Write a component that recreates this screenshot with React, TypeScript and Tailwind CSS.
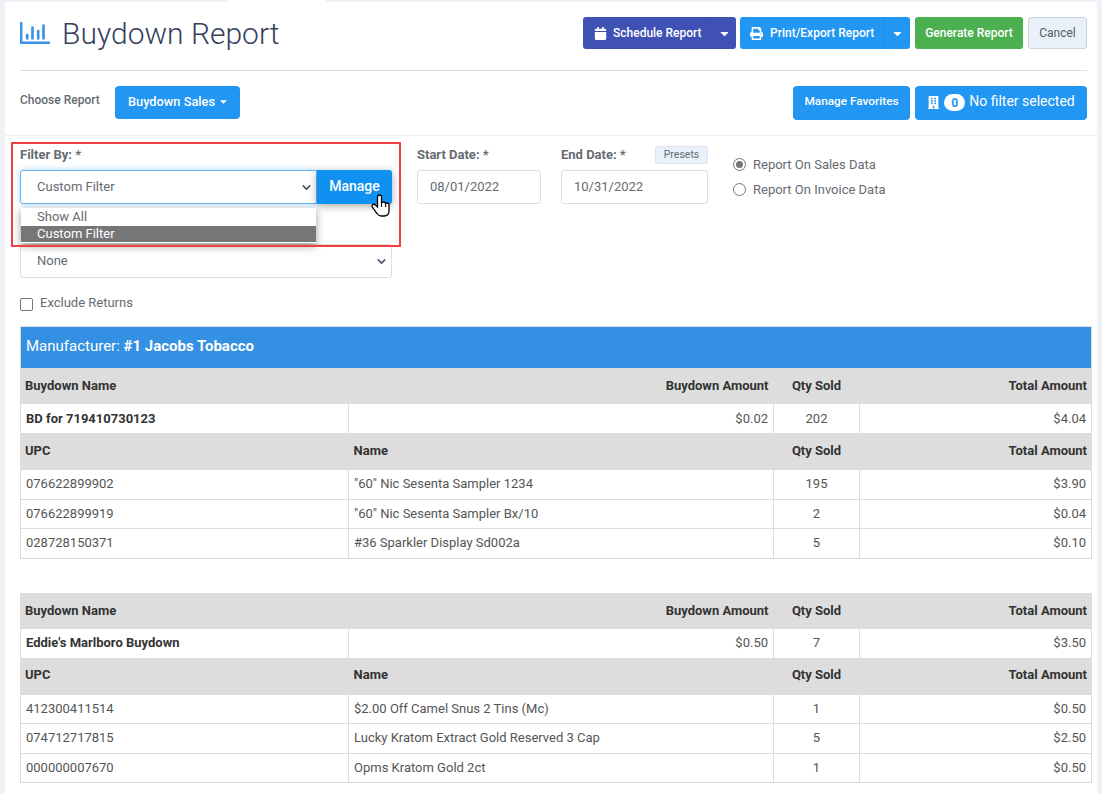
import { ChevronDown } from "lucide-react";
import { FaBuilding, FaCalendar, FaCaretDown, FaPrint } from "react-icons/fa";

type Line = { upc: string; name: string; qty: string; total: string };
type Buydown = { name: string; amount: string; qty: string; total: string; lines: Line[] };

const buydowns: Buydown[] = [
  {
    name: "BD for 719410730123",
    amount: "$0.02",
    qty: "202",
    total: "$4.04",
    lines: [
      { upc: "076622899902", name: '"60" Nic Sesenta Sampler 1234', qty: "195", total: "$3.90" },
      { upc: "076622899919", name: '"60" Nic Sesenta Sampler Bx/10', qty: "2", total: "$0.04" },
      { upc: "028728150371", name: "#36 Sparkler Display Sd002a", qty: "5", total: "$0.10" },
    ],
  },
  {
    name: "Eddie's Marlboro Buydown",
    amount: "$0.50",
    qty: "7",
    total: "$3.50",
    lines: [
      { upc: "412300411514", name: "$2.00 Off Camel Snus 2 Tins (Mc)", qty: "1", total: "$0.50" },
      { upc: "074712717815", name: "Lucky Kratom Extract Gold Reserved 3 Cap", qty: "5", total: "$2.50" },
      { upc: "000000007670", name: "Opms Kratom Gold 2ct", qty: "1", total: "$0.50" },
    ],
  },
];

function ReportIcon() {
  return (
    <svg width="30" height="23" viewBox="0 0 30 23" className="text-[#3d94e6]">
      <path d="M1.2 0v20.8H30" fill="none" stroke="currentColor" strokeWidth="2.5" />
      <path d="M7.2 13v3.5M12.5 5.5v11M18.2 9v7.5M23.5 3.5v13" fill="none" stroke="currentColor" strokeWidth="2.7" strokeLinecap="round" />
    </svg>
  );
}

function HandCursor() {
  return (
    <svg width="19" height="23" viewBox="0 0 19 23" className="absolute left-[366px] top-[192px]">
      <path
        d="M8.5 1C7.3 1 6.5 1.8 6.5 3V13L4.5 11C3.5 10 2 10 1.3 11C.8 11.8 1 12.6 1.6 13.3L6 19.5C7 21 8.5 22 10.5 22H13C16 22 18 20 18 17V11C18 9.8 17 9 16 9C15.4 9 15 9.2 14.6 9.5C14.3 8.6 13.5 8 12.6 8C12 8 11.4 8.3 10.5 8.6V3C10.5 1.8 9.7 1 8.5 1Z"
        fill="white"
        stroke="black"
        strokeWidth="1.3"
      />
      <path d="M10.5 8.6V13M14.6 9.5V13" fill="none" stroke="black" strokeWidth="1.1" />
    </svg>
  );
}

function BuydownTable({ data, manufacturer }: { data: Buydown; manufacturer?: string }) {
  const head = "bg-[#dddddd] font-bold text-[#333333] text-[13px]";
  const cell = "border border-[#dddddd] px-[5px] pb-[1px] text-[#555555] text-[13px]";
  const first = manufacturer !== undefined;
  const summary = `border border-[#dddddd] px-[5px] text-[13px] ${first ? "pb-0" : "pb-[2px]"}`;
  return (
    <table className="w-[1071px] table-fixed border-collapse border border-[#dddddd]">
      <colgroup>
        <col className="w-[328px]" />
        <col className="w-[425px]" />
        <col className="w-[86px]" />
        <col className="w-[232px]" />
      </colgroup>
      <tbody>
        {manufacturer && (
          <tr className="h-[41px]">
            <td colSpan={4} className="bg-[#3390e2] px-[5px] pb-[2px] text-[15px] text-white">
              Manufacturer: <b>{manufacturer}</b>
            </td>
          </tr>
        )}
        <tr className={first ? "h-[36px]" : "h-[35.5px]"}>
          <td className={`${head} pl-[4px]`}>Buydown Name</td>
          <td className={`${head} pr-[5px] text-right`}>Buydown Amount</td>
          <td className={`${head} text-center`}>Qty Sold</td>
          <td className={`${head} pr-[4px] text-right`}>Total Amount</td>
        </tr>
        <tr className={first ? "h-[30px]" : "h-[29.5px]"}>
          <td className={`${summary} font-bold text-[#333333]`}>{data.name}</td>
          <td className={`${summary} text-right text-[#555555]`}>{data.amount}</td>
          <td className={`${summary} text-center text-[#555555]`}>{data.qty}</td>
          <td className={`${summary} text-right text-[#555555]`}>{data.total}</td>
        </tr>
        <tr className="h-[36px]">
          <td className={`${head} pb-[2px] pl-[4px]`}>UPC</td>
          <td className={`${head} pb-[2px] pl-[5px]`}>Name</td>
          <td className={`${head} pb-[2px] text-center`}>Qty Sold</td>
          <td className={`${head} pb-[2px] pr-[4px] text-right`}>Total Amount</td>
        </tr>
        {data.lines.map((line) => (
          <tr key={line.upc} className="h-[29.5px]">
            <td className={cell}>{line.upc}</td>
            <td className={cell}>{line.name}</td>
            <td className={`${cell} text-center`}>{line.qty}</td>
            <td className={`${cell} text-right`}>{line.total}</td>
          </tr>
        ))}
      </tbody>
    </table>
  );
}

export default function App() {
  return (
    <div className="h-[794px] overflow-hidden bg-[#f0f0f7] pl-[5px] pr-[5px] pt-[2px] font-['Roboto',sans-serif]">
      <div className="relative h-[792px] bg-white">
        {/* open tab notch above the panel */}
        <div className="absolute left-[223px] top-[-2px] h-[2px] w-[98px] bg-white" />

        {/* Title row */}
        <div className="ml-[15px] mr-[10px] flex h-[69px] items-center justify-between border-b border-[#dddddd] pb-[8px] pt-[2px]">
          <div className="flex items-center gap-[12px]">
            <ReportIcon />
            <h1 className="text-[30px] font-light text-[#34415e]">Buydown Report</h1>
          </div>
          <div className="flex items-center text-[12px] font-medium text-white">
            <div className="flex h-[32px] w-[153px] rounded-[3px] bg-[#3f51b5]">
              <span className="flex flex-1 items-center gap-[6px] border-r border-[#3d4eae] pl-[11px]">
                <FaCalendar className="text-[13px]" /> Schedule Report
              </span>
              <span className="flex w-[24px] items-center justify-center"><FaCaretDown className="text-[13px]" /></span>
            </div>
            <div className="ml-[4px] flex h-[32px] w-[170px] rounded-[3px] bg-[#2196f3]">
              <span className="flex flex-1 items-center gap-[7px] border-r border-[#1f90ea] pl-[10px]">
                <FaPrint className="text-[13px]" /> Print/Export Report
              </span>
              <span className="flex w-[25px] items-center justify-center"><FaCaretDown className="text-[13px]" /></span>
            </div>
            <button className="ml-[5px] h-[32px] w-[108px] rounded-[3px] bg-[#4caf50]">Generate Report</button>
            <button className="ml-[5px] h-[32px] w-[59px] rounded-[3px] border border-[#ccd3da] bg-[#e8f1fa] font-normal text-[#555b63]">Cancel</button>
          </div>
        </div>

        {/* Choose report row */}
        <div className="flex h-[65px] items-start justify-between border-b border-[#eeeeee] pl-[15px] pr-[10px] pt-[15px]">
          <div className="flex items-start">
            <span className="mt-[5px] w-[95px] text-[12px] font-medium text-[#666b72]">Choose Report</span>
            <button className="flex h-[33px] w-[125px] items-center justify-center gap-[3px] rounded-[4px] bg-[#2196f3] pb-[2px] pl-[2px] text-[12.8px] font-medium text-white">
              Buydown Sales <FaCaretDown className="text-[11px]" />
            </button>
          </div>
          <div className="flex items-start gap-[5px]">
            <button className="h-[34px] w-[117px] rounded-[4px] bg-[#2196f3] pb-[2px] text-[11.8px] font-medium text-white">Manage Favorites</button>
            <button className="flex h-[34px] w-[172px] items-center justify-center gap-[4px] rounded-[4px] bg-[#2196f3] pb-[1px] text-[14px] text-white">
              <FaBuilding className="text-[13px]" />
              <span className="flex h-[17px] w-[21px] items-center justify-center rounded-full bg-white text-[12px] font-bold text-[#2196f3]">0</span>
              <span className="pb-[2px]">No filter selected</span>
            </button>
          </div>
        </div>

        {/* Filters */}
        <div className="flex h-[190px] px-[15px] pt-[11px] text-[13px] text-[#666b72]">
          <div className="w-[372px]">
            <label className="block h-[23px] text-[13px] font-bold leading-[16px]">Filter By: *</label>
            <div className="flex h-[34px]">
              <div className="flex w-[297px] items-center justify-between rounded-l-[3px] border border-[#64b5f6] pl-[16px] pr-[3px] shadow-[0_0_6px_rgba(100,181,246,0.5)]">
                Custom Filter <ChevronDown size={13} strokeWidth={3} className="text-[#4a5568]" />
              </div>
              <button className="w-[75px] rounded-r-[3px] bg-[#1090f0] pb-[1px] text-[14px] font-medium text-white shadow-[0_2px_8px_rgba(0,0,0,0.35)]">Manage</button>
            </div>
            <div className="mt-[40px] flex h-[34px] items-center justify-between rounded-[3px] border border-[#dddddd] pl-[16px] pr-[3px]">
              None <ChevronDown size={13} strokeWidth={3} className="text-[#4a5568]" />
            </div>
            <label className="mt-[18px] flex items-start gap-[7px]">
              <input type="checkbox" className="mt-[2px] h-[13px] w-[13px] appearance-none rounded-[2px] border border-[#767676] bg-white" />
              <span className="-mt-[1px] leading-[15px]">Exclude Returns</span>
            </label>
          </div>

          <div className="ml-[25px] w-[124px]">
            <label className="block h-[23px] text-[13px] font-bold leading-[16px]">Start Date: *</label>
            <div className="flex h-[34px] items-center rounded-[3px] border border-[#dddddd] pl-[12px]">08/01/2022</div>
          </div>

          <div className="ml-[20px] w-[147px]">
            <div className="flex h-[23px] items-start justify-between">
              <label className="text-[13px] font-bold leading-[16px]">End Date: *</label>
              <span className="mt-[-1px] flex h-[18px] w-[53px] items-center justify-center rounded-[2px] border border-[#dce6f0] bg-[#e8f1fa] text-[10.5px]">Presets</span>
            </div>
            <div className="flex h-[34px] items-center rounded-[3px] border border-[#dddddd] pl-[12px]">10/31/2022</div>
          </div>

          <div className="ml-[25px] flex flex-col gap-[10px] pt-[10px] leading-[15px]">
            <div className="flex items-center gap-[7px]">
              <span className="flex h-[13px] w-[13px] items-center justify-center rounded-full border border-[#767676]"><span className="h-[7px] w-[7px] rounded-full bg-[#767676]" /></span>
              Report On Sales Data
            </div>
            <div className="flex items-center gap-[7px]">
              <span className="h-[13px] w-[13px] rounded-full border border-[#767676]" />
              Report On Invoice Data
            </div>
          </div>
        </div>

        {/* Reports */}
        <div className="px-[15px]">
          <BuydownTable data={buydowns[0]} manufacturer="#1 Jacobs Tobacco" />
          <div className="h-[34px]" />
          <BuydownTable data={buydowns[1]} />
        </div>

        {/* Open select menu, highlight box and cursor */}
        <div className="absolute left-[16px] top-[206px] w-[295px] bg-white pb-[1px] text-[13px] leading-[17px] text-[#666b72] shadow-[0_3px_8px_rgba(0,0,0,0.4)]">
          <div className="h-[18px] pl-[16px]">Show All</div>
          <div className="h-[16px] bg-[#767676] pl-[16px] leading-[16px] text-white">Custom Filter</div>
        </div>
        <div className="pointer-events-none absolute left-[6px] top-[140px] h-[105px] w-[390px] border-2 border-[#f04040]" />
        <HandCursor />
      </div>
    </div>
  );
}
